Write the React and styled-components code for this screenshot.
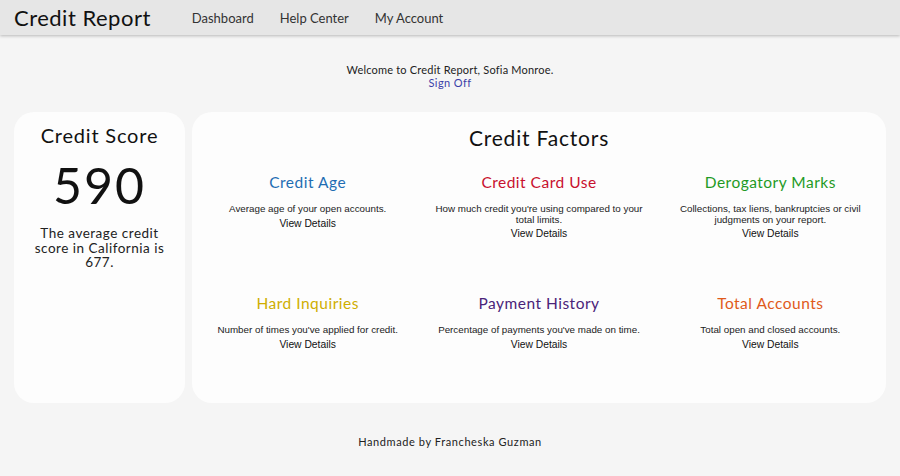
import React from "react";
import styled, { createGlobalStyle } from "styled-components";

const Global = createGlobalStyle`
  html, body { margin: 0; padding: 0; }
  body {
    background: #f5f5f5;
    font-family: Lato, "Noto Sans", sans-serif;
    color: #1a1a1a;
  }
`;

const Header = styled.header`
  height: 35px;
  background: #e6e6e6;
  box-shadow: 0 1px 3px rgba(0,0,0,0.25);
  display: flex;
  align-items: center;
  padding: 0 14px;
  position: relative;
  z-index: 1;
`;

const Brand = styled.h1`
  margin: 0 41px 0 0;
  font-size: 22px;
  font-weight: 400;
  letter-spacing: 0.5px;
  color: #111;
`;

const Nav = styled.nav`
  display: flex;
  gap: 26px;
`;

const NavLink = styled.a`
  font-size: 13px;
  color: #333;
  text-decoration: none;
`;

const Welcome = styled.div`
  text-align: center;
  font-size: 11px;
  letter-spacing: 0.2px;
  color: #222;
  padding-top: 28px;
  line-height: 13px;
  height: 49px;
`;

const SignOff = styled.a`
  display: block;
  color: #3b3fa8;
  letter-spacing: 0.4px;
  text-decoration: none;
`;

const Cards = styled.div`
  display: flex;
  gap: 7px;
  padding: 0 14px;
`;

const Card = styled.section`
  background: #fdfdfd;
  border-radius: 20px;
  height: 291px;
  box-sizing: border-box;
  flex: ${p => (p.$grow ? 1 : "0 0 171px")};
  text-align: center;
`;

const CardTitle = styled.h2`
  margin: 0;
  font-weight: 400;
  font-size: ${p => p.$size}px;
  letter-spacing: 0.8px;
  padding-top: ${p => p.$top}px;
  color: #111;
`;

const Score = styled.div`
  font-size: 50px;
  line-height: 60px;
  letter-spacing: 2px;
  margin-top: 8px;
  color: #111;
`;

const ScoreNote = styled.p`
  margin: 11px 18px 0;
  font-size: 13.5px;
  letter-spacing: 0.5px;
  line-height: 14.5px;
  color: #222;
`;

const Grid = styled.div`
  display: grid;
  grid-template-columns: repeat(3, 1fr);
  margin-top: 23px;
`;

const Factor = styled.div`
  height: 121px;
  display: flex;
  flex-direction: column;
  align-items: center;
  padding: 0 6px;
`;

const FactorTitle = styled.h3`
  margin: 0;
  font-size: 15.5px;
  letter-spacing: 0.5px;
  font-weight: 400;
  line-height: 18px;
  color: ${p => p.$color};
`;

const FactorDesc = styled.p`
  margin: 13px 0 0;
  font-family: "Liberation Sans", Arial, sans-serif;
  font-size: 9.8px;
  line-height: 10.5px;
  color: #222;
  max-width: 214px;
`;

const Details = styled.a`
  margin-top: 3px;
  font-family: "Liberation Sans", Arial, sans-serif;
  font-size: 10.3px;
  color: #111;
  text-decoration: none;
`;

const Footer = styled.footer`
  text-align: center;
  font-size: 11px;
  letter-spacing: 0.6px;
  color: #222;
  padding-top: 32px;
`;

const factors = [
  { t: "Credit Age", c: "#1f6db3", d: "Average age of your open accounts." },
  { t: "Credit Card Use", c: "#c8102e", d: "How much credit you're using compared to your total limits." },
  { t: "Derogatory Marks", c: "#1f9a25", d: "Collections, tax liens, bankruptcies or civil judgments on your report." },
  { t: "Hard Inquiries", c: "#cfae00", d: "Number of times you've applied for credit." },
  { t: "Payment History", c: "#4a2379", d: "Percentage of payments you've made on time." },
  { t: "Total Accounts", c: "#e05a1a", d: "Total open and closed accounts." },
];

export default function App() {
  return (
    <>
      <Global />
      <Header>
        <Brand>Credit Report</Brand>
        <Nav>
          <NavLink href="#">Dashboard</NavLink>
          <NavLink href="#">Help Center</NavLink>
          <NavLink href="#">My Account</NavLink>
        </Nav>
      </Header>
      <Welcome>
        Welcome to Credit Report, Sofia Monroe.
        <SignOff href="#">Sign Off</SignOff>
      </Welcome>
      <Cards>
        <Card>
          <CardTitle $size={20} $top={11}>Credit Score</CardTitle>
          <Score>590</Score>
          <ScoreNote>The average credit score in California is 677.</ScoreNote>
        </Card>
        <Card $grow>
          <CardTitle $size={21} $top={13}>Credit Factors</CardTitle>
          <Grid>
            {factors.map(f => (
              <Factor key={f.t}>
                <FactorTitle $color={f.c}>{f.t}</FactorTitle>
                <FactorDesc>{f.d}</FactorDesc>
                <Details href="#">View Details</Details>
              </Factor>
            ))}
          </Grid>
        </Card>
      </Cards>
      <Footer>Handmade by Francheska Guzman</Footer>
    </>
  );
}
